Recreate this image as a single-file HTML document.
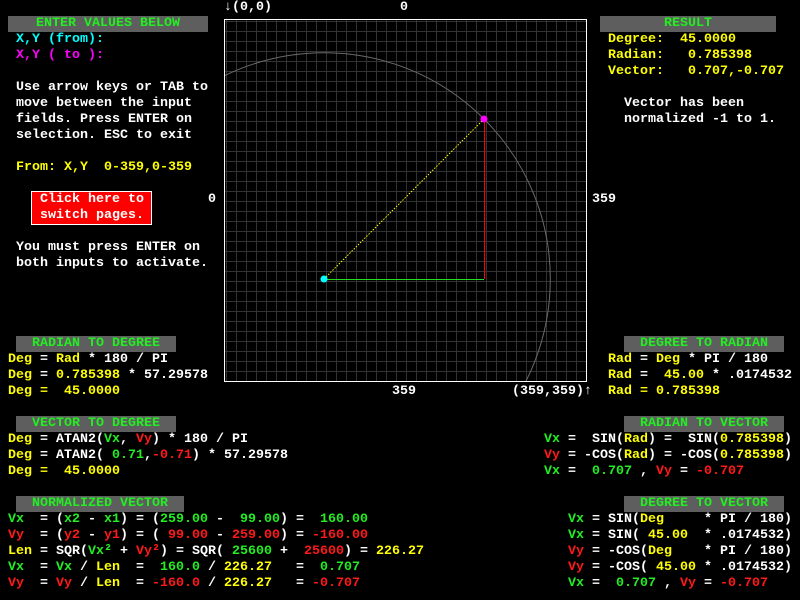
<!DOCTYPE html>
<html><head><meta charset="utf-8"><style>
html,body{margin:0;padding:0;background:#000;width:800px;height:600px;overflow:hidden}
body{position:relative;font-family:"Liberation Mono","DejaVu Sans Mono",monospace;font-size:13.33px;font-weight:bold;color:#fff}
.l{position:absolute;white-space:pre;line-height:16px;height:16px}
.bar{position:absolute;background:#5e5e5e;height:16px;line-height:16px;color:#22ee22;white-space:pre}
.y{color:#ffff00}.c{color:#00ffff}.m{color:#ff00ff}.g{color:#22ee22}.r{color:#ff1818}.w{color:#fff}
</style></head><body>
<div class="bar" style="left:8px;top:16px;width:200px;text-align:center">ENTER VALUES BELOW</div>
<div class="l c" style="left:16px;top:32px">X,Y (from):</div>
<div class="l m" style="left:16px;top:48px">X,Y ( to ):</div>
<div class="l" style="left:16px;top:80px">Use arrow keys or TAB to</div>
<div class="l" style="left:16px;top:96px">move between the input</div>
<div class="l" style="left:16px;top:112px">fields. Press ENTER on</div>
<div class="l" style="left:16px;top:128px">selection. ESC to exit</div>
<div class="l y" style="left:16px;top:160px">From: X,Y  0-359,0-359</div>
<div style="position:absolute;left:31px;top:191px;width:119px;height:32px;background:#ff0000;border:1px solid #fff"></div>
<div class="l" style="left:40px;top:192px">Click here to</div>
<div class="l" style="left:40px;top:208px">switch pages.</div>
<div class="l" style="left:16px;top:240px">You must press ENTER on</div>
<div class="l" style="left:16px;top:256px">both inputs to activate.</div>

<div class="bar" style="left:600px;top:16px;width:176px;text-align:center">RESULT</div>
<div class="l y" style="left:608px;top:32px">Degree:  45.0000</div>
<div class="l y" style="left:608px;top:48px">Radian:   0.785398</div>
<div class="l y" style="left:608px;top:64px">Vector:   0.707,-0.707</div>
<div class="l" style="left:624px;top:96px">Vector has been</div>
<div class="l" style="left:624px;top:112px">normalized -1 to 1.</div>

<div class="l" style="left:224px;top:0px">↓(0,0)</div>
<div class="l" style="left:400px;top:0px">0</div>
<div class="l" style="left:208px;top:192px">0</div>
<div class="l" style="left:592px;top:192px">359</div>
<div class="l" style="left:392px;top:384px">359</div>
<div class="l" style="left:512px;top:384px">(359,359)↑</div>

<svg style="position:absolute;left:0;top:0" width="800" height="600">
<defs><clipPath id="cp"><rect x="225" y="20" width="361" height="361"/></clipPath>
<pattern id="gr" x="226" y="21" width="10" height="10" patternUnits="userSpaceOnUse"><path d="M0.5 0V10M0 0.5H10" stroke="#333" stroke-width="1" fill="none"/></pattern></defs>
<rect x="225" y="20" width="361" height="361" fill="url(#gr)"/>
<rect x="224.5" y="19.5" width="362" height="362" fill="none" stroke="#fff"/>
<circle cx="324" cy="279" r="226.3" fill="none" stroke="#6a6a6a" stroke-width="1" clip-path="url(#cp)"/>
<line x1="324" y1="279.5" x2="484" y2="279.5" stroke="#22dd22"/>
<line x1="484.5" y1="119" x2="484.5" y2="279" stroke="#ff0000"/>
<line x1="324" y1="279" x2="484" y2="119" stroke="#ffff00" stroke-dasharray="1.5 1.5"/>
<circle cx="324" cy="279" r="3.5" fill="#00ffff"/>
<circle cx="484" cy="119" r="3.5" fill="#ff00ff"/>
</svg>

<div class="bar" style="left:16px;top:336px;width:160px;padding-left:0"><span style="position:absolute;left:16px">RADIAN TO DEGREE</span></div>
<div class="l" style="left:8px;top:352px"><span class="y">Deg</span> = <span class="y">Rad</span> * 180 / PI</div>
<div class="l" style="left:8px;top:368px"><span class="y">Deg</span> = <span class="y">0.785398</span> * 57.29578</div>
<div class="l y" style="left:8px;top:384px">Deg =  45.0000</div>

<div class="bar" style="left:624px;top:336px;width:160px"><span style="position:absolute;left:16px">DEGREE TO RADIAN</span></div>
<div class="l" style="left:608px;top:352px"><span class="y">Rad</span> = <span class="y">Deg</span> * PI / 180</div>
<div class="l" style="left:608px;top:368px"><span class="y">Rad</span> = <span class="y"> 45.00</span> * .0174532</div>
<div class="l y" style="left:608px;top:384px">Rad = 0.785398</div>

<div class="bar" style="left:16px;top:416px;width:160px"><span style="position:absolute;left:16px">VECTOR TO DEGREE</span></div>
<div class="l" style="left:8px;top:432px"><span class="y">Deg</span> = ATAN2(<span class="g">Vx</span>, <span class="r">Vy</span>) * 180 / PI</div>
<div class="l" style="left:8px;top:448px"><span class="y">Deg</span> = ATAN2(<span class="g"> 0.71</span>,<span class="r">-0.71</span>) * 57.29578</div>
<div class="l y" style="left:8px;top:464px">Deg =  45.0000</div>

<div class="bar" style="left:16px;top:496px;width:168px"><span style="position:absolute;left:16px">NORMALIZED VECTOR</span></div>
<div class="l" style="left:8px;top:512px"><span class="g">Vx</span>  = (<span class="g">x2</span> - <span class="g">x1</span>) = (<span class="g">259.00</span> - <span class="g"> 99.00</span>) = <span class="g"> 160.00</span></div>
<div class="l" style="left:8px;top:528px"><span class="r">Vy</span>  = (<span class="r">y2</span> - <span class="r">y1</span>) = (<span class="r"> 99.00</span> - <span class="r">259.00</span>) = <span class="r">-160.00</span></div>
<div class="l" style="left:8px;top:544px"><span class="y">Len</span> = SQR(<span class="g">Vx²</span> + <span class="r">Vy²</span>) = SQR(<span class="g"> 25600</span> + <span class="r"> 25600</span>) = <span class="y">226.27</span></div>
<div class="l" style="left:8px;top:560px"><span class="g">Vx</span>  = <span class="g">Vx</span> / <span class="y">Len</span>  = <span class="g"> 160.0</span> / <span class="y">226.27</span>   = <span class="g"> 0.707</span></div>
<div class="l" style="left:8px;top:576px"><span class="r">Vy</span>  = <span class="r">Vy</span> / <span class="y">Len</span>  = <span class="r">-160.0</span> / <span class="y">226.27</span>   = <span class="r">-0.707</span></div>

<div class="bar" style="left:624px;top:416px;width:160px"><span style="position:absolute;left:16px">RADIAN TO VECTOR</span></div>
<div class="l" style="left:544px;top:432px"><span class="g">Vx</span> =  SIN(<span class="y">Rad</span>) =  SIN(<span class="y">0.785398</span>)</div>
<div class="l" style="left:544px;top:448px"><span class="r">Vy</span> = -COS(<span class="y">Rad</span>) = -COS(<span class="y">0.785398</span>)</div>
<div class="l" style="left:544px;top:464px"><span class="g">Vx</span> =  <span class="g">0.707</span> , <span class="r">Vy</span> = <span class="r">-0.707</span></div>

<div class="bar" style="left:624px;top:496px;width:160px"><span style="position:absolute;left:16px">DEGREE TO VECTOR</span></div>
<div class="l" style="left:568px;top:512px"><span class="g">Vx</span> = SIN(<span class="y">Deg</span>     * PI / 180)</div>
<div class="l" style="left:568px;top:528px"><span class="g">Vx</span> = SIN( <span class="y">45.00</span>  * .0174532)</div>
<div class="l" style="left:568px;top:544px"><span class="r">Vy</span> = -COS(<span class="y">Deg</span>    * PI / 180)</div>
<div class="l" style="left:568px;top:560px"><span class="r">Vy</span> = -COS( <span class="y">45.00</span> * .0174532)</div>
<div class="l" style="left:568px;top:576px"><span class="g">Vx</span> =  <span class="g">0.707</span> , <span class="r">Vy</span> = <span class="r">-0.707</span></div>
</body></html>
